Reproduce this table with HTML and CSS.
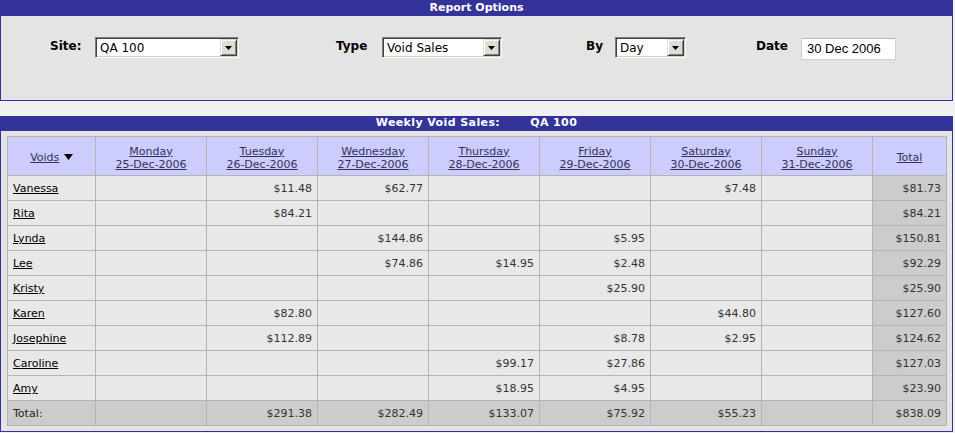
FILE: index.html
```html
<!DOCTYPE html>
<html>
<head>
<meta charset="utf-8">
<title>Weekly Void Sales</title>
<link rel="stylesheet" href="styles.css">
</head>
<body>
<div class="panel options">
  <div class="bar bar-top">Report Options</div>
  <div class="form">
    <div class="field">
      <span class="lbl lbl-site">Site:</span>
      <div class="select sel-site"><span class="sel-text">QA 100</span><span class="sel-btn"><svg width="7" height="4" viewBox="0 0 7 4"><path d="M0 0H7L3.5 4Z" fill="#000"/></svg></span></div>
    </div>
    <div class="field">
      <span class="lbl lbl-type">Type</span>
      <div class="select sel-type"><span class="sel-text">Void Sales</span><span class="sel-btn"><svg width="7" height="4" viewBox="0 0 7 4"><path d="M0 0H7L3.5 4Z" fill="#000"/></svg></span></div>
    </div>
    <div class="field">
      <span class="lbl lbl-by">By</span>
      <div class="select sel-by"><span class="sel-text">Day</span><span class="sel-btn"><svg width="7" height="4" viewBox="0 0 7 4"><path d="M0 0H7L3.5 4Z" fill="#000"/></svg></span></div>
    </div>
    <div class="field">
      <span class="lbl lbl-date">Date</span>
      <div class="input-date">30 Dec 2006</div>
    </div>
  </div>
</div>

<div class="panel report">
  <div class="bar bar-report">Weekly Void Sales:<span class="site-name">QA 100</span></div>
  <div class="report-body">
    <table class="grid">
      <colgroup>
        <col class="c-name"><col class="c-day"><col class="c-day"><col class="c-day"><col class="c-day"><col class="c-day"><col class="c-day"><col class="c-day"><col class="c-total">
      </colgroup>
      <thead>
        <tr>
          <th><span class="link">Voids</span> <svg class="sort" width="9" height="6" viewBox="0 0 9 6"><path d="M0 0H9L4.5 6Z" fill="#000"/></svg></th>
          <th><span class="link">Monday<br>25-Dec-2006</span></th>
          <th><span class="link">Tuesday<br>26-Dec-2006</span></th>
          <th><span class="link">Wednesday<br>27-Dec-2006</span></th>
          <th><span class="link">Thursday<br>28-Dec-2006</span></th>
          <th><span class="link">Friday<br>29-Dec-2006</span></th>
          <th><span class="link">Saturday<br>30-Dec-2006</span></th>
          <th><span class="link">Sunday<br>31-Dec-2006</span></th>
          <th><span class="link">Total</span></th>
        </tr>
      </thead>
      <tbody>
        <tr><td class="name"><span class="link">Vanessa</span></td><td></td><td>$11.48</td><td>$62.77</td><td></td><td></td><td>$7.48</td><td></td><td class="tot">$81.73</td></tr>
        <tr><td class="name"><span class="link">Rita</span></td><td></td><td>$84.21</td><td></td><td></td><td></td><td></td><td></td><td class="tot">$84.21</td></tr>
        <tr><td class="name"><span class="link">Lynda</span></td><td></td><td></td><td>$144.86</td><td></td><td>$5.95</td><td></td><td></td><td class="tot">$150.81</td></tr>
        <tr><td class="name"><span class="link">Lee</span></td><td></td><td></td><td>$74.86</td><td>$14.95</td><td>$2.48</td><td></td><td></td><td class="tot">$92.29</td></tr>
        <tr><td class="name"><span class="link">Kristy</span></td><td></td><td></td><td></td><td></td><td>$25.90</td><td></td><td></td><td class="tot">$25.90</td></tr>
        <tr><td class="name"><span class="link">Karen</span></td><td></td><td>$82.80</td><td></td><td></td><td></td><td>$44.80</td><td></td><td class="tot">$127.60</td></tr>
        <tr><td class="name"><span class="link">Josephine</span></td><td></td><td>$112.89</td><td></td><td></td><td>$8.78</td><td>$2.95</td><td></td><td class="tot">$124.62</td></tr>
        <tr><td class="name"><span class="link">Caroline</span></td><td></td><td></td><td></td><td>$99.17</td><td>$27.86</td><td></td><td></td><td class="tot">$127.03</td></tr>
        <tr><td class="name"><span class="link">Amy</span></td><td></td><td></td><td></td><td>$18.95</td><td>$4.95</td><td></td><td></td><td class="tot">$23.90</td></tr>
      </tbody>
      <tfoot>
        <tr><td class="name">Total:</td><td></td><td>$291.38</td><td>$282.49</td><td>$133.07</td><td>$75.92</td><td>$55.23</td><td></td><td>$838.09</td></tr>
      </tfoot>
    </table>
  </div>
</div>
</body>
</html>
```

FILE: styles.css
```css
html, body {
  margin: 0;
  padding: 0;
  background: #f1f1f1;
}
body {
  font-family: "DejaVu Sans", Verdana, sans-serif;
  font-size: 11px;
  color: #000;
}
.panel {
  width: 953px;
  box-sizing: border-box;
  border: 1px solid #333399;
  border-top: none;
  background: #e4e4e4;
}
.bar {
  background: #333399;
  color: #fff;
  font-weight: bold;
  font-size: 11px;
  text-align: center;
  margin: 0 -1px;
}
.bar-top {
  height: 16px;
  line-height: 15px;
}
.options {
  height: 101px;
}
.form {
  display: grid;
  grid-template-columns: 286px 250px 170px auto;
  padding: 21px 0 0 49px;
}
.field {
  display: flex;
  align-items: flex-start;
}
.lbl {
  font-weight: bold;
  font-size: 12px;
  line-height: 14px;
  padding-top: 2px;
}
.lbl-site { width: 45px; }
.lbl-type { width: 46px; }
.lbl-by { width: 29px; }
.lbl-date { width: 45px; }
.select {
  display: flex;
  align-items: center;
  height: 21px;
  box-sizing: border-box;
  background: #fff;
  border: 1px solid;
  border-color: #808080 #ffffff #ffffff #808080;
  box-shadow: inset 1px 1px #404040, inset -1px -1px #d4d0c8;
  padding: 1px;
}
.sel-site { width: 144px; }
.sel-type { width: 120px; }
.sel-by { width: 71px; }
.sel-text {
  flex: 1;
  font-size: 12px;
  padding: 1px 0 0 3px;
  line-height: 15px;
  white-space: nowrap;
}
.sel-btn {
  width: 17px;
  height: 17px;
  box-sizing: border-box;
  background: #e0ddd6;
  border: 1px solid;
  border-color: #e0ddd6 #404040 #404040 #e0ddd6;
  box-shadow: inset 1px 1px #fff, inset -1px -1px #808080;
  display: flex;
  align-items: center;
  justify-content: center;
}
.input-date {
  width: 95px;
  height: 22px;
  box-sizing: border-box;
  margin-top: 1px;
  background: #fff;
  border: 1px solid #d0d0d0;
  border-top-color: #b8b8b8;
  font-family: "Liberation Sans", Arial, sans-serif;
  font-size: 13px;
  line-height: 19px;
  padding-left: 5px;
}
.report {
  margin-top: 15px;
  height: 316px;
}
.bar-report {
  height: 15px;
  line-height: 14px;
  letter-spacing: 0.4px;
}
.site-name {
  margin-left: 30px;
}
.report-body {
  padding: 5px 0 0 6px;
}
.grid {
  table-layout: fixed;
  width: 940px;
  border-collapse: separate;
  border-spacing: 1px;
  background: #b4b4b4;
  font-size: 11px;
}
.c-name { width: 87px; }
.c-day { width: 110px; }
.c-total { width: 73px; }
.grid th {
  background: #ccccff;
  height: 38px;
  padding: 3px 0 0 0;
  box-sizing: border-box;
  font-weight: normal;
  color: #33335a;
  line-height: 13px;
  text-align: center;
  vertical-align: middle;
}
.grid th .sort {
  vertical-align: 1px;
  margin-left: 1px;
}
.grid td {
  background: #e8e8e8;
  height: 24px;
  padding: 1px 5px 0 5px;
  box-sizing: border-box;
  color: #333;
  text-align: right;
  vertical-align: middle;
  white-space: nowrap;
  line-height: 13px;
}
.grid td.name {
  text-align: left;
  color: #000;
}
.grid td.tot {
  background: #cccccc;
}
.grid tfoot td {
  background: #cccccc;
}
.grid tfoot td.name {
  color: #222;
}
.link {
  text-decoration: underline;
}
```
